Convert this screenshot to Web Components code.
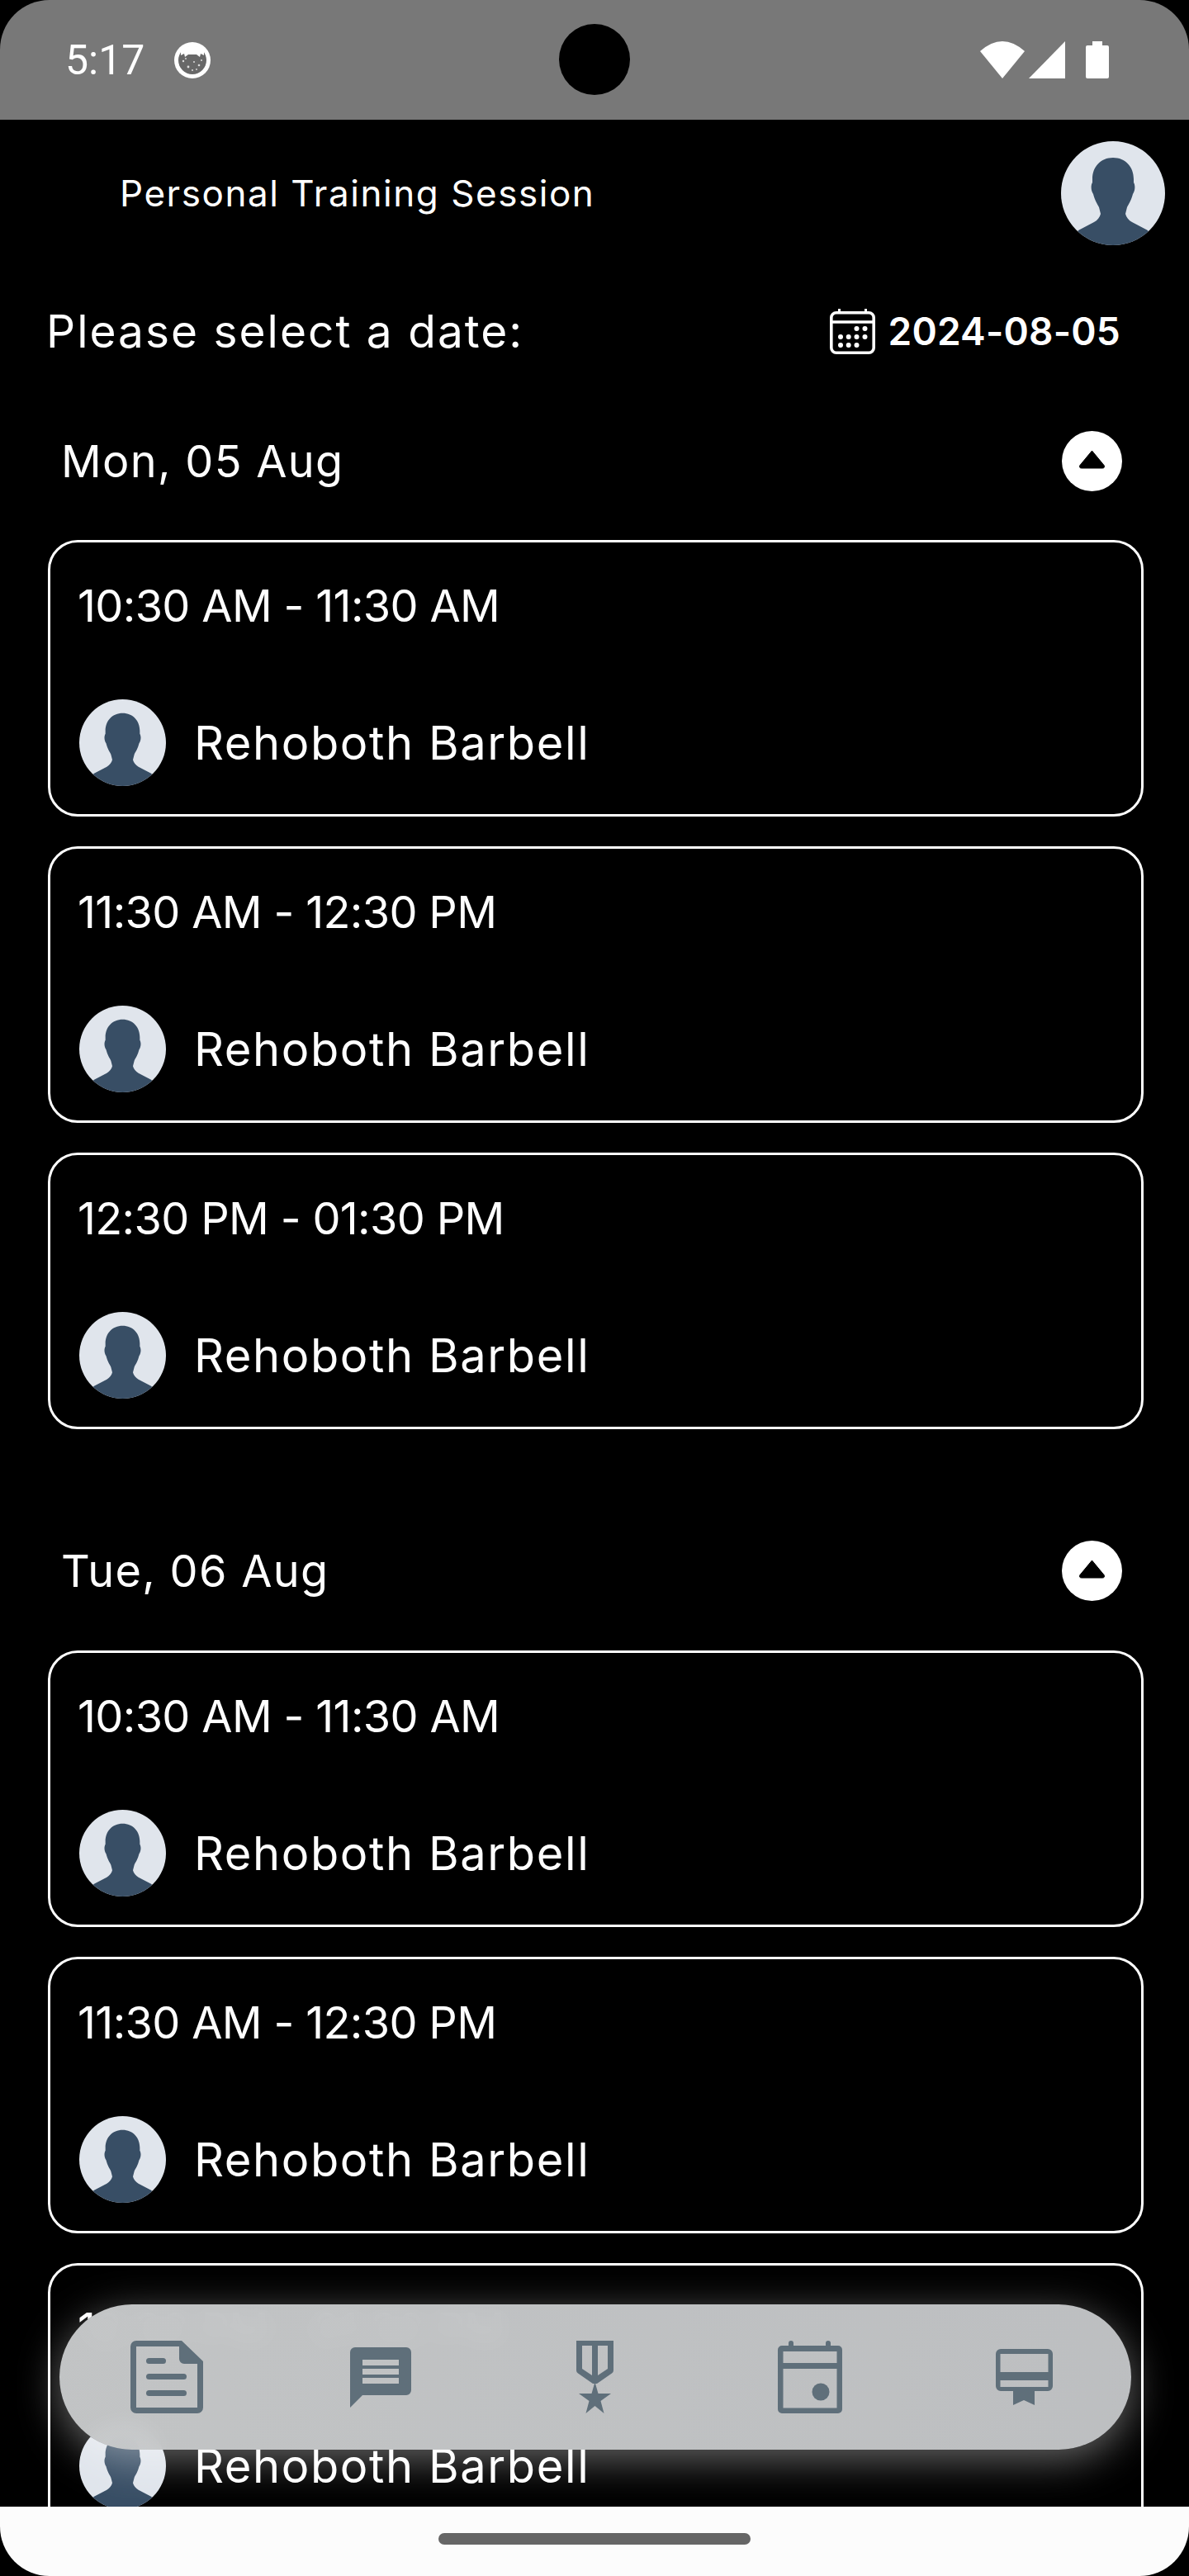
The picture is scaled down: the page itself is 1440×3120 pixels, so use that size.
<!DOCTYPE html>
<html lang="en"><head><meta charset="utf-8"><title>Personal Training Session</title>
<style>
html,body{margin:0;background:#000;color:#fff;font-family:Inter,"Liberation Sans",sans-serif}
</style></head><body>
<app-shell>
  <status-bar slot="status"></status-bar>
  <session-header></session-header>
  <date-picker-row></date-picker-row>
  <day-section day="Mon, 05 Aug"></day-section>
  <day-section day="Tue, 06 Aug" class="second"></day-section>
  <bottom-nav slot="overlay"></bottom-nav>
  <home-bar slot="home"></home-bar>
</app-shell>
<script>
const def=(name,css,html)=>customElements.define(name,class extends HTMLElement{
  connectedCallback(){ if(this.shadowRoot)return; const r=this.attachShadow({mode:'open'});
    r.innerHTML=`<style>${css}</style>${typeof html==='function'?html(this):html}`; }
});
def('app-shell',`
:host{display:block;width:1440px;height:3120px;position:relative;overflow:hidden;background:#000}
.col{display:flex;flex-direction:column;height:100%}
main{flex:1;min-height:0;overflow:hidden;display:flex;flex-direction:column}
`,`<div class="col"><slot name="status"></slot><main><slot></slot></main><slot name="home"></slot></div><slot name="overlay"></slot>`);

def('status-bar',`
:host{display:flex;align-items:center;height:145px;box-sizing:border-box;flex:none;background:#787878;border-radius:60px 60px 0 0;padding:0 97px 0 79px;position:relative;color:#fff;font:400 50px Roboto,sans-serif}
.time{margin-right:36px;line-height:56px}
.sp{flex:1}
svg{display:block}
.cam{position:absolute;left:677px;top:29px;width:86px;height:86px;border-radius:50%;background:#000}
.wifi{margin-right:5px}.sig{margin-right:25px}
`,`<span class="time">5:17</span>
<svg width="44" height="44" viewBox="0 0 44 44"><circle cx="22" cy="22" r="22" fill="#fff"/><circle cx="22" cy="22" r="17" fill="#686868"/><path d="M8 10C12 3 32 3 36 10L36 16L32 14L31 18L27 15H17L13 18L12 14L8 16Z" fill="#fff"/><g fill="#ddd"><circle cx="11" cy="23" r="1.2"/><circle cx="17" cy="30" r="1.4"/><circle cx="24" cy="24" r="1"/><circle cx="30" cy="28" r="1.3"/><circle cx="22" cy="34" r="1"/><circle cx="14" cy="20" r=".9"/><circle cx="33" cy="22" r="1"/><circle cx="27" cy="33" r=".9"/></g></svg>
<span class="sp"></span>
<svg class="wifi" width="54" height="45" viewBox="0 0 54 45"><path d="M27 45L0 12Q27-12 54 12Z" fill="#fff"/></svg>
<svg class="sig" width="44" height="45" viewBox="0 0 44 45"><path d="M44 0V45H0Z" fill="#fff"/></svg>
<svg width="28" height="45" viewBox="0 0 28 45"><path d="M8 0H20V5H26A2 2 0 0 1 28 7V43A2 2 0 0 1 26 45H2A2 2 0 0 1 0 43V7A2 2 0 0 1 2 5H8Z" fill="#fff"/></svg>
<div class="cam"></div>`);

def('user-avatar',`
:host{display:block;flex:none;width:var(--size,105px);height:var(--size,105px)}
svg{display:block;width:100%;height:100%}
`,`<svg viewBox="0 0 126 126"><defs><clipPath id="c"><circle cx="63" cy="63" r="63"/></clipPath></defs><g clip-path="url(#c)"><rect width="126" height="126" fill="#e0e5ec"/><path d="M63 20C78 20 88 31 88 46V50C90 53 90 60 87 64C85 72 82 76 80 80L78 88C79 92 82 96 86 98L105 108L115 130H11L21 108L40 98C44 96 47 92 48 88L46 80C44 76 41 72 39 64C36 60 36 53 38 50V46C38 31 48 20 63 20Z" fill="#384e65"/></g></svg>`);

def('session-header',`
:host{display:flex;align-items:center;justify-content:space-between;height:126px;margin-top:26px;padding:0 29px 0 145px;flex:none}
span{font:400 44px/60px Inter,sans-serif;color:#fff;letter-spacing:1.55px}
user-avatar{--size:126px}
`,`<span>Personal Training Session</span><user-avatar></user-avatar>`);

def('date-picker-row',`
:host{display:flex;align-items:center;justify-content:space-between;height:68px;margin-top:70px;padding:0 83px 0 56px;flex:none}
.l{font:400 55px/68px Inter,sans-serif;letter-spacing:2px;color:#fff}
.r{display:flex;align-items:center;gap:16px;font:600 46px/56px Inter,sans-serif;letter-spacing:.2px;color:#fff}
svg{display:block}
`,`<span class="l">Please select a date:</span><span class="r"><svg width="55" height="55" viewBox="0 0 55 55"><g fill="none" stroke="#fff" stroke-width="3.6"><rect x="1.8" y="4.8" width="51.4" height="48.4" rx="6"/><path d="M2 16H53"/></g><path d="M10 0h3v5h-3zM42 0h3v5h-3z" fill="#fff"/><g fill="#fff"><circle cx="32.5" cy="24" r="3"/><circle cx="42.5" cy="24" r="3"/><circle cx="13" cy="34" r="3"/><circle cx="22.7" cy="34" r="3"/><circle cx="32.5" cy="34" r="3"/><circle cx="42.5" cy="34" r="3"/><circle cx="13" cy="44" r="3"/><circle cx="22.7" cy="44" r="3"/><circle cx="32.5" cy="44" r="3"/></g></svg><span>2024-08-05</span></span>`);

def('session-card',`
:host{display:block;box-sizing:border-box;border:3px solid #fff;border-radius:36px;padding:47px 35px 34px;color:#fff}
.t{font:400 54px/60px Inter,sans-serif;letter-spacing:-.65px;white-space:nowrap;margin-left:-2px}
.who{display:flex;align-items:center;gap:34px;margin-top:83px;font:400 56px/68px Inter,sans-serif;letter-spacing:1.6px;white-space:nowrap}
`,h=>`<div class="t">${h.getAttribute('time')}</div><div class="who"><user-avatar></user-avatar><span>Rehoboth Barbell</span></div>`);

def('day-section',`
:host{display:block;margin-top:87px;flex:none}
:host(.second){margin-top:135px}
:host(.second) .list{margin-top:60px}
.head{display:flex;align-items:center;justify-content:space-between;height:73px;padding:0 81px 0 74px;font:400 54px/73px Inter,sans-serif;letter-spacing:1.3px;color:#fff}
.list{display:flex;flex-direction:column;gap:36px;margin:59px 55px 0 58px}
svg{display:block}
`,h=>`<div class="head"><span>${h.getAttribute('day')}</span><svg width="73" height="73" viewBox="0 0 73 73"><circle cx="36.5" cy="36.5" r="36.5" fill="#fff"/><path d="M36.5 24L51 41.5Q52.500 45 49 45H24Q20.500 45 22 41.500Z" fill="#000" stroke="#000" stroke-width="1" stroke-linejoin="round"/></svg></div>
<div class="list"><session-card time="10:30 AM - 11:30 AM"></session-card><session-card time="11:30 AM - 12:30 PM"></session-card><session-card time="12:30 PM - 01:30 PM"></session-card></div>`);

def('bottom-nav',`
:host{position:absolute;left:72px;top:2791px;width:1298px;height:176px;border-radius:88px;background:linear-gradient(90deg,rgba(200,202,203,.97),rgba(195,197,199,.97));box-shadow:0 12px 50px rgba(255,255,255,.4);backdrop-filter:blur(12px);display:grid;grid-template-columns:repeat(5,1fr);align-items:center;justify-items:center;z-index:2}
svg{display:block;fill:#5f6f7a}
`,`
<svg width="88" height="88" viewBox="0 0 88 88"><path fill-rule="evenodd" d="M7 0H62L88 25V81A7 7 0 0 1 81 88H7A7 7 0 0 1 0 81V7A7 7 0 0 1 7 0ZM7 7V81H81V28H65A6 6 0 0 1 59 22V7Z"/><rect x="19" y="21" width="24" height="7" rx="3.5"/><rect x="19" y="40" width="49" height="7" rx="3.500"/><rect x="19" y="60" width="49" height="7" rx="3.500"/></svg>
<svg width="74" height="73" viewBox="0 0 74 73"><path fill-rule="evenodd" d="M6 0H68A6 6 0 0 1 74 6V52A6 6 0 0 1 68 58H15L0 73V6A6 6 0 0 1 6 0ZM15 15V22H59V15ZM15 26V33H59V26ZM15 37V44H59V37Z"/></svg>
<svg width="45" height="88" viewBox="0 0 45 88"><path fill-rule="evenodd" d="M0 0H45V36Q45 38 43 39.500L25 52H20L2 39.500Q0 38 0 36ZM7 6V34L19 42V6ZM26 6V42L38 34V6Z"/><path d="M22.500 50L26.500 64H42L29.500 73L33.500 88L22.500 79L11.500 88L15.500 73L3 64H18.500Z"/></svg>
<svg width="78" height="88" viewBox="0 0 78 88"><path fill-rule="evenodd" d="M5 6H73A5 5 0 0 1 78 11V83A5 5 0 0 1 73 88H5A5 5 0 0 1 0 83V11A5 5 0 0 1 5 6ZM6.500 13V27H71.500V13ZM6.500 34V81.500H71.500V34Z"/><rect x="13" y="0" width="6" height="10" rx="3"/><rect x="58" y="0" width="6" height="10" rx="3"/><ellipse cx="52" cy="62" rx="10.500" ry="10.500"/></svg>
<svg width="69" height="68" viewBox="0 0 69 68"><path fill-rule="evenodd" d="M6 0H63A6 6 0 0 1 69 6V45A6 6 0 0 1 63 51H6A6 6 0 0 1 0 45V6A6 6 0 0 1 6 0ZM5.500 6V28H63.500V6ZM5.500 38V46H63.500V38Z"/><path d="M21 51H47V68L34 62L21 68Z"/></svg>`);

def('home-bar',`
:host{display:flex;align-items:center;justify-content:center;flex:none;height:84px;background:#fcfcfc;border-radius:0 0 60px 60px}
i{display:block;width:378px;height:14px;margin-top:-7px;border-radius:7px;background:#666}
`,`<i></i>`);
</script>
</body></html>
